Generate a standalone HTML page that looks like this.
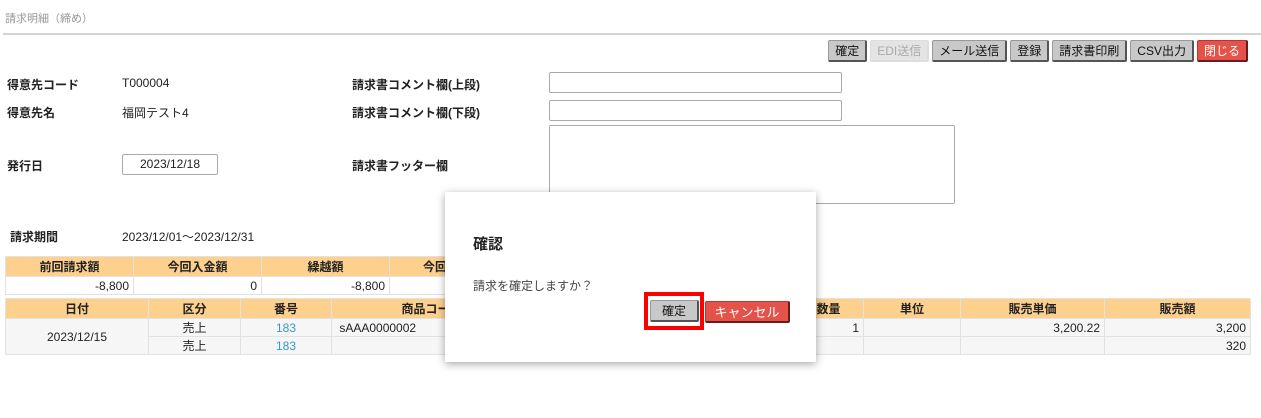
<!DOCTYPE html>
<html><head><meta charset="utf-8">
<style>
*{box-sizing:border-box;margin:0;padding:0}
body{width:1261px;height:418px;background:#fff;position:relative;overflow:hidden;font-family:"Liberation Sans","Noto Sans CJK JP",sans-serif;font-size:12px;color:#222}
.a{position:absolute;white-space:nowrap}
.b{font-weight:bold}
.btns{position:absolute;top:40px;right:13px;display:flex;gap:3px}
.btn{height:22px;line-height:21px;padding:0 6px;background:#c8c8c8;border:1px solid #999;border-right:2px solid #555;border-bottom:2px solid #555;border-radius:2px;font-size:12px;color:#111}
.dis{background:#e4e4e4;color:#aaa;border-color:#ddd}
.red{background:#e4534a;color:#fff;border-color:#b33;border-right-color:#6a1c1c;border-bottom-color:#6a1c1c}
.inp{position:absolute;border:1px solid #aaa;border-radius:2px;background:#fff}
table{border-collapse:collapse;position:absolute;table-layout:fixed}
td,th{border:1px solid #e2e2e2;font-size:12px;height:18px;padding:0 4px}
th{background:#fdd08e;font-weight:bold;text-align:center;height:20px}
td{background:#fff}
.r{text-align:right}.c{text-align:center}
.dt td{background:#f6f6f6;height:16px}
.lk{color:#3399cc}
</style></head><body>
<div class="a" style="left:5px;top:10px;font-size:11px;color:#999">請求明細（締め）</div>
<div class="a" style="left:3px;top:33px;width:1258px;height:2px;background:#d4d4d4"></div>
<div class="btns">
<div class="btn">確定</div><div class="btn dis">EDI送信</div><div class="btn">メール送信</div><div class="btn">登録</div><div class="btn">請求書印刷</div><div class="btn">CSV出力</div><div class="btn red">閉じる</div>
</div>
<div class="a b" style="left:7px;top:76px">得意先コード</div>
<div class="a" style="left:122px;top:76px">T000004</div>
<div class="a b" style="left:7px;top:104px">得意先名</div>
<div class="a" style="left:122px;top:104px">福岡テスト4</div>
<div class="a b" style="left:7px;top:157px">発行日</div>
<div class="inp" style="left:122px;top:154px;width:96px;height:21px;text-align:center;line-height:19px;font-size:12px">2023/12/18</div>
<div class="a b" style="left:352px;top:76px">請求書コメント欄(上段)</div>
<div class="a b" style="left:352px;top:104px">請求書コメント欄(下段)</div>
<div class="a b" style="left:352px;top:157px">請求書フッター欄</div>
<div class="inp" style="left:549px;top:72px;width:293px;height:21px"></div>
<div class="inp" style="left:549px;top:100px;width:293px;height:21px"></div>
<div class="inp" style="left:549px;top:125px;width:406px;height:79px"></div>
<div class="a b" style="left:10px;top:228px">請求期間</div>
<div class="a" style="left:122px;top:228px">2023/12/01～2023/12/31</div>
<table style="left:5px;top:256px;width:512px">
<tr><th style="width:128px">前回請求額</th><th style="width:128px">今回入金額</th><th style="width:128px">繰越額</th><th>今回売上額</th></tr>
<tr><td class="r">-8,800</td><td class="r">0</td><td class="r">-8,800</td><td></td></tr>
</table>
<table class="dt" style="left:5px;top:298px;width:1246px">
<tr><th style="width:143px">日付</th><th style="width:92px">区分</th><th style="width:91px">番号</th><th style="width:200px">商品コード</th><th>商品名</th><th style="width:70px">数量</th><th style="width:97px">単位</th><th style="width:144px">販売単価</th><th style="width:146px">販売額</th></tr>
<tr><td rowspan="2" class="c">2023/12/15</td><td class="c">売上</td><td class="c lk">183</td><td>&nbsp;sAAA0000002</td><td></td><td class="r">1</td><td></td><td class="r">3,200.22</td><td class="r">3,200</td></tr>
<tr><td class="c">売上</td><td class="c lk">183</td><td></td><td></td><td></td><td></td><td></td><td class="r">320</td></tr>
</table>
<div class="a" style="left:445px;top:192px;width:371px;height:170px;background:#fff;box-shadow:0 2px 8px rgba(0,0,0,.35)">
<div class="a b" style="left:28px;top:41px;font-size:15px">確認</div>
<div class="a" style="left:28px;top:85px;color:#444">請求を確定しますか？</div>
<div class="a" style="left:199px;top:100px;width:60px;height:38px;border:4px solid #f00"></div>
<div class="a btn" style="left:205px;top:108px;width:49px;text-align:center;padding:0">確定</div>
<div class="a btn red" style="left:260px;top:109px;width:85px;text-align:center;padding:0;font-size:13px">キャンセル</div>
</div>
</body></html>
